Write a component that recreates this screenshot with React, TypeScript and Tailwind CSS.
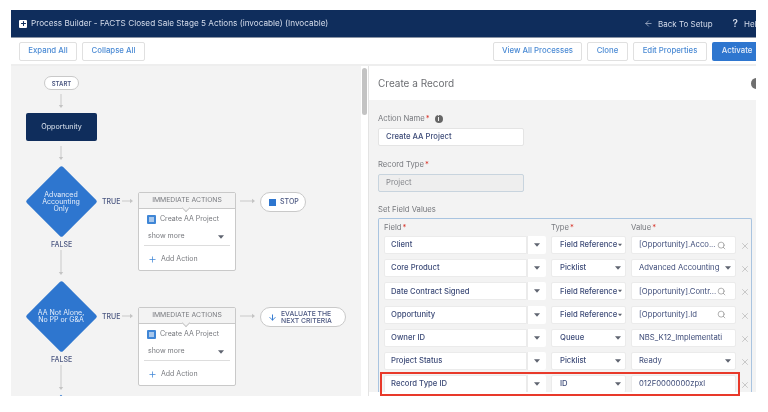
import React from "react";
import { ArrowLeft, Search, X, ArrowDown, Plus } from "lucide-react";

function Tri({ className = "" }: { className?: string }) {
  return (
    <svg width="6" height="4" viewBox="0 0 7 4" className={className}>
      <path d="M0 0H7L3.5 4Z" fill="#5f6470" />
    </svg>
  );
}

function VArrow({ x, y, h }: { x: number; y: number; h: number }) {
  return (
    <svg className="absolute" style={{ left: x - 3, top: y }} width="6" height={h} viewBox={`0 0 6 ${h}`}>
      <path d={`M3 0V${h - 2}`} stroke="#c9c9c9" strokeWidth="1" />
      <path d={`M0.8 ${h - 3}L3 ${h}L5.2 ${h - 3}Z`} fill="#c4c4c4" />
    </svg>
  );
}

function HArrow({ x, y, w }: { x: number; y: number; w: number }) {
  return (
    <svg className="absolute" style={{ left: x, top: y - 3 }} width={w} height="6" viewBox={`0 0 ${w} 6`}>
      <path d={`M0 3H${w - 2}`} stroke="#c9c9c9" strokeWidth="1" />
      <path d={`M${w - 3} 0.8L${w} 3L${w - 3} 5.2Z`} fill="#c4c4c4" />
    </svg>
  );
}

function Diamond({ cy, lines }: { cy: number; lines: string[] }) {
  return (
    <div className="absolute left-[14px] w-[72px] h-[72px]" style={{ top: cy - 36 - 66 }}>
      <div className="absolute left-[10.5px] top-[10.5px] w-[51px] h-[51px] rotate-45 rounded-[2px] bg-[#2e76cf]" />
      <div className="absolute inset-0 flex flex-col items-center justify-center text-[7px] leading-[7px] text-[#e6eefa]">
        {lines.map((l) => (
          <span key={l} className="whitespace-nowrap">{l}</span>
        ))}
      </div>
    </div>
  );
}

function Small({ x, y, children }: { x: number; y: number; children: React.ReactNode }) {
  return (
    <span className="absolute text-[7px] leading-[9px] font-medium text-[#4a5680]" style={{ left: x, top: y - 4.5 }}>
      {children}
    </span>
  );
}

function Actions({ top }: { top: number }) {
  return (
    <div className="absolute left-[127px] w-[98px] h-[79px] bg-white border border-[#c9c9c9] rounded-[2px]" style={{ top }}>
      <div className="relative h-[16px] bg-[#f3f3f3] border-b border-[#c9c9c9] flex items-center justify-center text-[6.8px] text-[#77797e]">
        IMMEDIATE ACTIONS
        <span className="absolute left-[44px] top-[12px] w-[6px] h-[6px] rotate-45 bg-[#f3f3f3] border-r border-b border-[#c9c9c9]" />
      </div>
      <div className="flex items-center h-[18px] pl-[8px] pt-[3px] gap-[4px] text-[7px] text-[#77797e]">
        <span className="w-[9px] h-[9px] rounded-[1px] bg-[#3f86d6] flex items-center justify-center">
          <span className="w-[5px] h-[5px] bg-[#a9c8ec]" />
        </span>
        Create AA Project
      </div>
      <div className="flex items-center justify-between h-[18px] pl-[9px] pr-[11px] pt-[1px] text-[7px] text-[#77797e]">
        show more
        <Tri />
      </div>
      <div className="mx-[5px] border-t border-[#dddddd] h-[25px] pt-[2px] flex items-center gap-[4px] pl-[4px] text-[7px] text-[#77797e]">
        <Plus size={9} strokeWidth={2} className="text-[#3f86d6]" />
        Add Action
      </div>
    </div>
  );
}

function Canvas() {
  return (
    <div className="relative w-[350px] h-[330px] shrink-0 bg-[#f3f3f3] overflow-hidden">
      <div className="absolute left-[33px] top-[10px] w-[35px] h-[14px] rounded-full border border-[#c9c9c9] bg-white flex items-center justify-center text-[6px] font-semibold text-[#4a5680]">
        START
      </div>
      <VArrow x={50} y={28} h={14} />
      <div className="absolute left-[15px] top-[47px] w-[71px] h-[28px] rounded-[2px] bg-[#0f2d5c] flex items-center justify-center text-[7.2px] text-[#dfe6f0]">
        Opportunity
      </div>
      <VArrow x={50} y={80} h={14} />
      <Diamond cy={201} lines={["Advanced", "Accounting", "Only"]} />
      <Small x={91} y={135}>TRUE</Small>
      <HArrow x={111} y={135} w={11} />
      <Actions top={126} />
      <HArrow x={229} y={135} w={15} />
      <div className="absolute left-[249px] top-[126px] w-[46px] h-[20px] rounded-full border border-[#c9c9c9] bg-white flex items-center pl-[8px] gap-[4px] text-[7px] font-medium text-[#4a5680]">
        <span className="w-[7px] h-[7px] bg-[#2e76cf]" />
        STOP
      </div>
      <Small x={40} y={178}>FALSE</Small>
      <VArrow x={50} y={184} h={25} />
      <Diamond cy={316} lines={["AA Not Alone,", "No PP or G&A"]} />
      <Small x={91} y={250}>TRUE</Small>
      <HArrow x={111} y={250} w={11} />
      <Actions top={241} />
      <HArrow x={229} y={250} w={15} />
      <div className="absolute left-[249px] top-[241px] w-[86px] h-[20px] rounded-full border border-[#c9c9c9] bg-white flex items-center pl-[7px] gap-[4px] text-[6.8px] leading-[7px] font-medium text-[#4a5680]">
        <ArrowDown size={9} strokeWidth={2.5} className="text-[#2e76cf]" />
        <span className="whitespace-nowrap">
          EVALUATE THE
          <br />
          NEXT CRITERIA
        </span>
      </div>
      <Small x={40} y={293}>FALSE</Small>
      <VArrow x={50} y={299} h={25} />
      <div className="absolute left-[47px] top-[330px] w-[6px] h-[6px] rotate-45 bg-[#2e76cf]" />
    </div>
  );
}

type Row = { field: string; type: string; value: string; kind: "search" | "select" | "text" };
const rows: Row[] = [
  { field: "Client", type: "Field Reference", value: "[Opportunity].Acco...", kind: "search" },
  { field: "Core Product", type: "Picklist", value: "Advanced Accounting", kind: "select" },
  { field: "Date Contract Signed", type: "Field Reference", value: "[Opportunity].Contr...", kind: "search" },
  { field: "Opportunity", type: "Field Reference", value: "[Opportunity].Id", kind: "search" },
  { field: "Owner ID", type: "Queue", value: "NBS_K12_Implementati", kind: "text" },
  { field: "Project Status", type: "Picklist", value: "Ready", kind: "select" },
  { field: "Record Type ID", type: "ID", value: "012F0000000zpxl", kind: "text" },
];

function Req() {
  return <span className="text-[#d8352a] ml-[1px]">*</span>;
}

function FieldRow({ r }: { r: Row }) {
  const cell = "h-[18px] bg-white border border-[#ebebeb] rounded-[2px] flex items-center text-[7.7px] font-medium text-[#3d4b78]";
  return (
    <div className="flex items-center h-[18px] shrink-0">
      <div className={`${cell} w-[143px] pl-[6px] rounded-r-none`}>{r.field}</div>
      <div className="w-[19px] h-[18px] bg-white rounded-r-[2px] flex items-center justify-center shrink-0 border-l border-[#ebebeb]">
        <Tri />
      </div>
      <div className={`${cell} ml-[5px] w-[75px] pl-[8px] pr-[3px] justify-between`}>
        <span className="whitespace-nowrap">{r.type}</span>
        <Tri className={r.type === "Field Reference" ? "w-[4px] shrink-0" : "mr-[1px]"} />
      </div>
      <div className={`${cell} ml-[5px] w-[105px] pl-[7px] justify-between whitespace-nowrap overflow-hidden ${r.kind === "select" ? "pr-[4px]" : "pr-[9px]"}`}>
        <span className="font-normal">{r.value}</span>
        {r.kind === "search" && <Search size={9} strokeWidth={1.6} className="text-[#808080] shrink-0" />}
        {r.kind === "select" && <Tri className="shrink-0" />}
      </div>
      <X size={10} strokeWidth={1.4} className="ml-[4px] mt-[2px] text-[#a9a9a9] shrink-0" />
    </div>
  );
}

function Panel() {
  return (
    <div className="flex-1 h-[326px] flex flex-col overflow-hidden bg-[#f3f3f3] relative">
      <div className="h-[34px] shrink-0 bg-white flex items-center pl-[9px] text-[10px] text-[#6c6e72] relative">
        Create a Record
        <span className="absolute left-[382px] top-[12px] w-[11px] h-[11px] rounded-full bg-[#6f6f6f]" />
      </div>
      <div className="pl-[9px] pt-[14px] flex-1 min-h-0 flex flex-col">
        <div className="flex items-center h-[10px] text-[7.7px] text-[#77797e]">
          Action Name<Req />
          <span className="ml-[5px] w-[8px] h-[8px] rounded-full bg-[#666] text-white text-[6px] leading-[8px] text-center font-bold">i</span>
        </div>
        <div className="mt-[4px] w-[146px] h-[18px] bg-white border border-[#e4e4e4] rounded-[2px] flex items-center pl-[7px] text-[7.7px] font-medium text-[#3d4b78]">
          Create AA Project
        </div>
        <div className="mt-[14px] flex items-center h-[10px] text-[7.7px] text-[#77797e]">
          Record Type<Req />
        </div>
        <div className="mt-[4px] w-[146px] h-[18px] bg-[#eeeeee] border border-[#c8d4de] rounded-[2px] flex items-center pl-[7px] text-[7.7px] text-[#85878c]">
          Project
        </div>
        <div className="mt-[13px] h-[10px] flex items-center text-[7.7px] text-[#77797e]">Set Field Values</div>
        <div className="mt-[3px] w-[374px] flex-1 min-h-0 border border-b-0 border-[#a9c4e0] rounded-t-[2px] pl-[5px] flex flex-col overflow-hidden">
          <div className="flex h-[17px] items-center text-[7.7px] text-[#77797e] shrink-0">
            <span className="w-[167px]">Field<Req /></span>
            <span className="w-[80px]">Type<Req /></span>
            <span>Value<Req /></span>
          </div>
          <div className="flex flex-col gap-[5.2px]">
            {rows.map((r) => (
              <FieldRow key={r.field} r={r} />
            ))}
          </div>
        </div>
      </div>
    </div>
  );
}

function Btn({ w, children, primary }: { w: number; children: React.ReactNode; primary?: boolean }) {
  return (
    <div
      style={{ width: w }}
      className={
        "h-[19px] shrink-0 rounded-[2px] flex items-center justify-center text-[7.8px] font-medium " +
        (primary ? "bg-[#2e76cf] text-[#e6eefa]" : "bg-white border border-[#e0e0e0] text-[#4a8ad4]")
      }
    >
      {children}
    </div>
  );
}

export default function App() {
  return (
    <div className="w-[768px] h-[412px] bg-white overflow-hidden pl-[11px] pt-[10px] relative font-['Inter',sans-serif] blur-[0.5px]">
      <div className="w-[745px] h-[386px] overflow-hidden flex flex-col">
        <div className="h-[28px] shrink-0 bg-[#0f2d5c] border-b border-[#8a94a5] flex items-center pl-[8px] text-[8.2px] text-[#d5dceb]">
          <span className="relative w-[8px] h-[8px] rounded-[1px] bg-white flex items-center justify-center">
            <Plus size={7} strokeWidth={3.5} className="text-[#0f2d5c]" />
          </span>
          <span className="ml-[4px] whitespace-nowrap">Process Builder - FACTS Closed Sale Stage 5 Actions (invocable) (Invocable)</span>
          <ArrowLeft size={9} strokeWidth={1.6} className="ml-auto" />
          <span className="ml-[5px] whitespace-nowrap text-[8px]">Back To Setup</span>
          <span className="ml-[20px] text-[10px] font-semibold">?</span>
          <span className="ml-[6px] w-[12px] overflow-hidden whitespace-nowrap text-[8px]">Help</span>
        </div>
        <div className="h-[28px] shrink-0 bg-white border-b-2 border-[#eeeeee] flex items-center pl-[8px]">
          <Btn w={58}>Expand All</Btn>
          <div className="ml-[5px]"><Btn w={63}>Collapse All</Btn></div>
          <div className="ml-auto flex gap-[5px] -mr-[6px]">
            <Btn w={89}>View All Processes</Btn>
            <Btn w={41}>Clone</Btn>
            <Btn w={74}>Edit Properties</Btn>
            <Btn w={50} primary>Activate</Btn>
          </div>
        </div>
        <div className="flex flex-1 min-h-0">
          <Canvas />
          <div className="w-[8px] shrink-0 bg-white border-r border-[#e3e3e3] pl-[1px] pt-[2px] h-[330px]">
            <div className="w-[5px] h-[47px] rounded-full bg-[#c3c3c3]" />
          </div>
          <Panel />
        </div>
      </div>
      <div className="absolute left-[380px] top-[372px] w-[360px] h-[24px] border-2 border-[#e8392a] pointer-events-none" />
    </div>
  );
}
